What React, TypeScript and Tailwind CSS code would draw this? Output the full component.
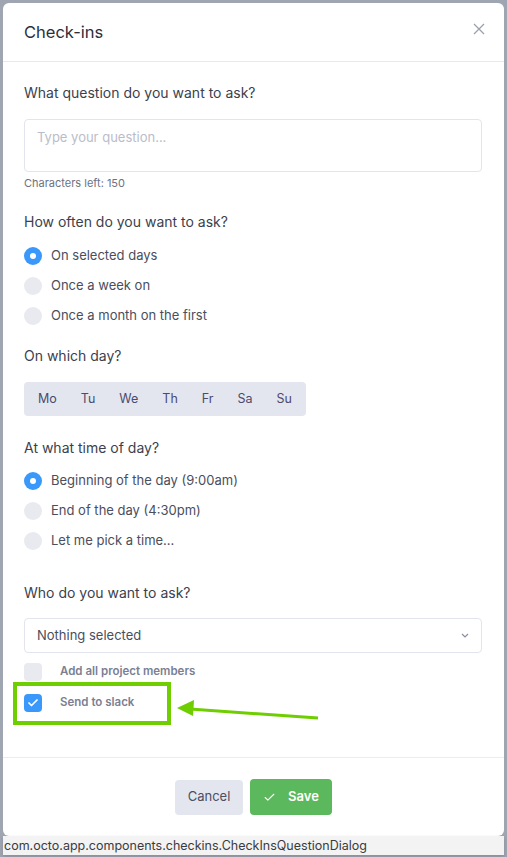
import { Check } from 'lucide-react'

const font = { fontFamily: 'Inter, "Liberation Sans", sans-serif' }

const Radio = ({ checked, label }: { checked?: boolean; label: string }) => (
  <div className="flex h-[18px] items-center">
    {checked ? (
      <span className="flex h-[18px] w-[18px] items-center justify-center rounded-full bg-[#3a98fb]">
        <span className="h-[6px] w-[6px] rounded-full bg-white" />
      </span>
    ) : (
      <span className="h-[18px] w-[18px] rounded-full bg-[#e9eaf0]" />
    )}
    <span className="ml-[9px] text-[13px] text-[#4a4e5d]">{label}</span>
  </div>
)

const CheckBox = ({ checked, label }: { checked?: boolean; label: string }) => (
  <div className="flex h-[18px] items-center">
    {checked ? (
      <span className="flex h-[18px] w-[18px] items-center justify-center rounded-[4px] bg-[#3a98fb]">
        <Check className="h-[12px] w-[12px] text-white" strokeWidth={3.5} />
      </span>
    ) : (
      <span className="h-[18px] w-[18px] rounded-[4px] bg-[#e9eaf0]" />
    )}
    <span className="ml-[18px] text-[11.5px] font-semibold text-[#7b7f93]">{label}</span>
  </div>
)

const days = ['Mo', 'Tu', 'We', 'Th', 'Fr', 'Sa', 'Su']

export default function App() {
  return (
    <div className="relative h-[857px] w-[507px] bg-[#a0a5b2] px-[3px] pt-[3px]" style={font}>
      <div className="flex h-[833px] flex-col rounded-md bg-white">
        <div className="flex h-[59px] items-center justify-between border-b border-[#e8e9ef] pl-[21px] pr-[19px]">
          <h2 className="text-[16.5px] text-[#2c2f3b]">Check-ins</h2>
          <svg width="12" height="12" viewBox="0 0 12 12" className="-mt-[6px]">
            <path d="M1 1L11 11M11 1L1 11" stroke="#9ba0ac" strokeWidth="1.3" />
          </svg>
        </div>

        <div className="flex-1 px-[21px] pt-[21px]">
          <p className="text-[14px] leading-5 text-[#3c3f4d]">What question do you want to ask?</p>
          <div className="mt-4 h-[53px] w-[458px] rounded-[4px] border border-[#e3e5ee] px-[12px] pt-[8px] text-[13px] text-[#babdc9]">
            Type your question...
          </div>
          <p className="mt-[3px] text-[11px] leading-4 text-[#6d7182]">Characters left: 150</p>

          <p className="mt-[21px] text-[14px] leading-5 text-[#3c3f4d]">How often do you want to ask?</p>
          <div className="mt-[15px] flex flex-col gap-3">
            <Radio checked label="On selected days" />
            <Radio label="Once a week on" />
            <Radio label="Once a month on the first" />
          </div>

          <p className="mt-[21px] text-[14px] leading-5 text-[#3c3f4d]">On which day?</p>
          <div className="mt-4 flex h-[34px] w-[282px] items-center rounded-[4px] bg-[#e3e6ef] px-[2px]">
            {days.map((d) => (
              <span key={d} className="px-[12px] text-[12.5px] text-[#4d4a6c]">
                {d}
              </span>
            ))}
          </div>

          <p className="mt-[22px] text-[14px] leading-5 text-[#3c3f4d]">At what time of day?</p>
          <div className="mt-[14px] flex flex-col gap-3">
            <Radio checked label="Beginning of the day (9:00am)" />
            <Radio label="End of the day (4:30pm)" />
            <Radio label="Let me pick a time..." />
          </div>

          <p className="mt-[33px] text-[14px] leading-5 text-[#3c3f4d]">Who do you want to ask?</p>
          <div className="mt-[15px] flex h-[35px] w-[458px] items-center justify-between rounded-[4px] border border-[#e3e5ee] pl-[12px] pr-[12px]">
            <span className="text-[13px] text-[#4a4e5d]">Nothing selected</span>
            <svg width="8" height="5" viewBox="0 0 8 5">
              <path d="M1 1L4 4L7 1" stroke="#8a8ea0" strokeWidth="1.2" fill="none" />
            </svg>
          </div>
          <div className="mt-[10px] flex flex-col gap-[13px]">
            <CheckBox label="Add all project members" />
            <CheckBox checked label="Send to slack" />
          </div>
        </div>

        <div className="flex h-[79px] items-center justify-center gap-[7px] border-t border-[#ebecf1]">
          <button className="h-[35px] w-[68px] rounded-[4px] bg-[#e3e6ef] text-[13px] text-[#4a4e63]">Cancel</button>
          <button className="flex h-[36px] w-[82px] items-center justify-center gap-[12px] rounded-[4px] bg-[#5cb85c] text-[13px] font-semibold text-white">
            <Check className="h-[13px] w-[13px]" strokeWidth={2} />
            Save
          </button>
        </div>
      </div>

      <div className="h-[19px] bg-[#f3f3f4] pl-[1px] text-[12.5px] leading-[19px] text-[#3a3b40] shadow-[0_2px_4px_rgba(0,0,0,0.15)]">
        com.octo.app.components.checkins.CheckInsQuestionDialog
      </div>

      {/* annotation */}
      <div className="absolute left-[13px] top-[682px] h-[43px] w-[158px] border-4 border-[#6fce00]" />
      <svg className="absolute left-0 top-0" width="507" height="857">
        <path d="M318 718L190 709" stroke="#6fce00" strokeWidth="3" />
        <path d="M177 708L194 700L193 716Z" fill="#6fce00" />
      </svg>
    </div>
  )
}
